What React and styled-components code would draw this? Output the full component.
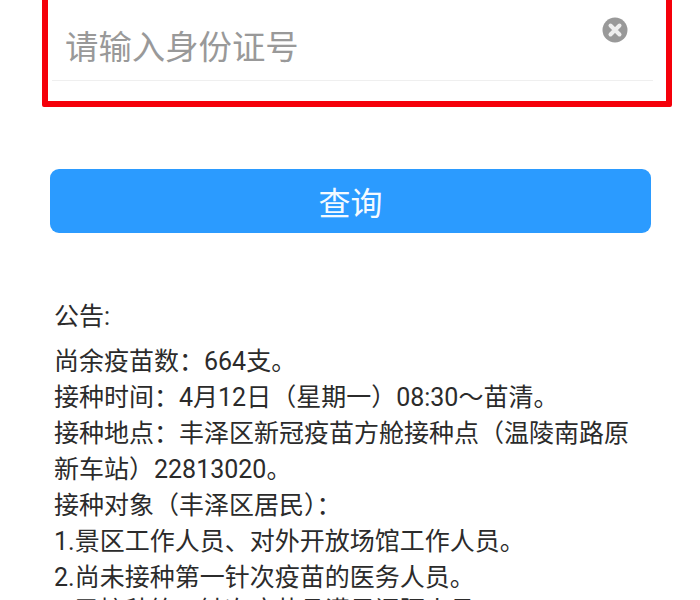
import styled, { createGlobalStyle } from "styled-components";

const Global = createGlobalStyle`
html, body {
  margin: 0;
  padding: 0;
  background: #fff;
}
`

const Page = styled.div`
width: 700px;
height: 600px;
overflow: hidden;
font-family: "Roboto", "Noto Sans CJK SC", sans-serif;
`

const InputFrame = styled.div`
margin: -8px 28px 0 42px;
height: 115px;
box-sizing: border-box;
border: 6px solid #f5000a;
border-radius: 2px;
padding: 0 13px 0 4px;
`

const InputRow = styled.div`
display: flex;
justify-content: space-between;
height: 83px;
box-sizing: border-box;
border-bottom: 1px solid #efefef;
padding: 0 25px 0 13px;
`

const Placeholder = styled.div`
font-size: 33.4px;
line-height: 38px;
margin-top: 31px;
color: #999;
`

const ClearIcon = styled.svg`
width: 26px;
height: 26px;
margin-top: 19px;
`

const SearchButton = styled.button`
display: block;
width: 601px;
height: 64px;
margin: 62px 0 0 50px;
border: none;
border-radius: 9px;
background: #2b9bff;
color: #f4faff;
font-family: inherit;
font-size: 32px;
`

const Notice = styled.div`
margin: 66px 50px 0 54px;
color: #2b2b2b;
font-size: 25px;
line-height: 36px;
`

const Title = styled.p`
margin: 0 0 9px;
`

const Line = styled.p`
margin: 0;

&:last-child {
    margin-top: -3px;
}
`

const lines = [
  "尚余疫苗数：664支。",
  "接种时间：4月12日（星期一）08:30～苗清。",
  "接种地点：丰泽区新冠疫苗方舱接种点（温陵南路原新车站）22813020。",
  "接种对象（丰泽区居民）：",
  "1.景区工作人员、对外开放场馆工作人员。",
  "2.尚未接种第一针次疫苗的医务人员。",
  "3.已接种第一针次疫苗且满足间隔人员。",
];

export default function App() {
  return (
    <Page>
      <Global />
      <InputFrame>
        <InputRow>
          <Placeholder>请输入身份证号</Placeholder>
          <ClearIcon viewBox="0 0 26 26">
            <circle cx="13" cy="13" r="12.5" fill="#999" />
            <path d="M8.5 8.5 L17.5 17.5 M17.5 8.5 L8.5 17.5" stroke="#eee" strokeWidth="4" strokeLinecap="round" />
          </ClearIcon>
        </InputRow>
      </InputFrame>
      <SearchButton>查询</SearchButton>
      <Notice>
        <Title>公告:</Title>
        {lines.map((line, id) => (
          <Line key={id}>{line}</Line>
        ))}
      </Notice>
    </Page>
  );
}
